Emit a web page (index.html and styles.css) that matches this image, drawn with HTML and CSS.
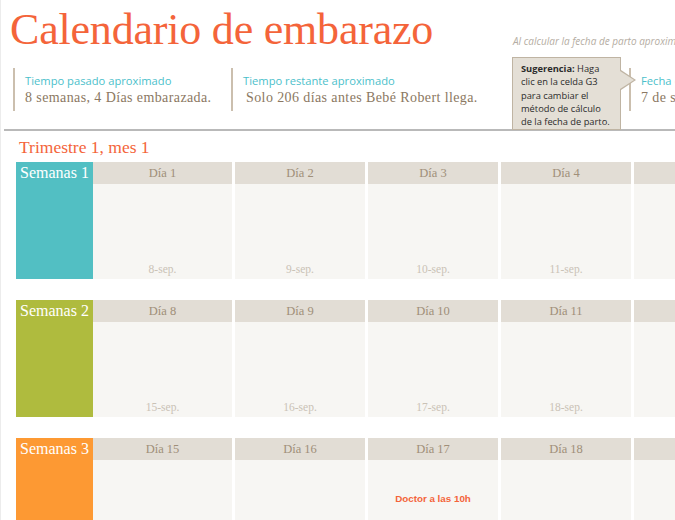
FILE: index.html
```html
<!DOCTYPE html>
<html lang="es">
<head>
    <meta charset="UTF-8">
    <meta name="viewport" content="width=device-width, initial-scale=1.0">
    <title>Calendario de embarazo</title>
    <link rel="stylesheet" href="styles.css">
</head>
<body>
    <div class="page">
        <div class="title-row">
            <h1 class="title">Calendario de embarazo</h1>
            <div class="note">Al calcular la fecha de parto aproximada</div>
        </div>

        <div class="info-row">
            <div class="info first">
                <div class="label">Tiempo pasado aproximado</div>
                <div class="value">8 semanas, 4 Días embarazada.</div>
            </div>
            <div class="info second">
                <div class="label">Tiempo restante aproximado</div>
                <div class="value indent">Solo 206 días antes Bebé Robert llega.</div>
            </div>
            <div class="info">
                <div class="label">Fecha de parto aproximada</div>
                <div class="value">7 de septiembre</div>
            </div>
            <!-- comentario de la celda -->
            <div class="tip"><b>Sugerencia:</b> Haga<br>clic en la celda G3<br>para cambiar el<br>método de cálculo<br>de la fecha de parto.</div>
        </div>

        <div class="rule"></div>

        <h2 class="month">Trimestre 1, mes 1</h2>

        <div class="week">
            <div class="week-label teal">Semanas 1</div>
            <div class="day"><div class="day-head">Día 1</div><div class="day-body"><span class="date">8-sep.</span></div></div>
            <div class="day"><div class="day-head">Día 2</div><div class="day-body"><span class="date">9-sep.</span></div></div>
            <div class="day"><div class="day-head">Día 3</div><div class="day-body"><span class="date">10-sep.</span></div></div>
            <div class="day"><div class="day-head">Día 4</div><div class="day-body"><span class="date">11-sep.</span></div></div>
            <div class="day"><div class="day-head">Día 5</div><div class="day-body"><span class="date">12-sep.</span></div></div>
        </div>

        <div class="week">
            <div class="week-label green">Semanas 2</div>
            <div class="day"><div class="day-head">Día 8</div><div class="day-body"><span class="date">15-sep.</span></div></div>
            <div class="day"><div class="day-head">Día 9</div><div class="day-body"><span class="date">16-sep.</span></div></div>
            <div class="day"><div class="day-head">Día 10</div><div class="day-body"><span class="date">17-sep.</span></div></div>
            <div class="day"><div class="day-head">Día 11</div><div class="day-body"><span class="date">18-sep.</span></div></div>
            <div class="day"><div class="day-head">Día 12</div><div class="day-body"><span class="date">19-sep.</span></div></div>
        </div>

        <div class="week">
            <div class="week-label orange">Semanas 3</div>
            <div class="day"><div class="day-head">Día 15</div><div class="day-body"></div></div>
            <div class="day"><div class="day-head">Día 16</div><div class="day-body"></div></div>
            <div class="day"><div class="day-head">Día 17</div><div class="day-body event"><span class="event-text">Doctor a las 10h</span></div></div>
            <div class="day"><div class="day-head">Día 18</div><div class="day-body"></div></div>
            <div class="day"><div class="day-head">Día 19</div><div class="day-body"></div></div>
        </div>
    </div>
</body>
</html>
```
FILE: styles.css
```css
html, body {
    margin: 0;
    padding: 0;
    overflow: hidden;
    background: #fff;
}
.page {
    position: relative;
    width: 674px;
    height: 520px;
    overflow: hidden;
    border-left: 1px solid #ececec;
    font-family: "Liberation Serif", serif;
}
.title-row {
    display: flex;
}
.title {
    flex: 0 0 512px;
    margin: 0;
    padding: 8px 0 0 9px;
    box-sizing: border-box;
    font-size: 44px;
    font-weight: normal;
    line-height: 44px;
    letter-spacing: -0.2px;
    color: #f4643a;
}
.note {
    align-self: flex-end;
    margin-bottom: 4px;
    white-space: nowrap;
    font-family: "Open Sans", sans-serif;
    font-style: italic;
    font-size: 10px;
    line-height: 14px;
    color: #b5ada3;
}
.info-row {
    position: relative;
    display: flex;
    margin-top: 16px;
    padding-left: 12px;
}
.info {
    flex-shrink: 0;
    height: 43px;
    padding: 5px 0 0 10px;
    box-sizing: border-box;
    border-left: 2px solid #cbbfae;
    white-space: nowrap;
}
.info.first {
    width: 218px;
}
.info.second {
    width: 398px;
}
.label {
    font-family: "Open Sans", sans-serif;
    font-size: 11.2px;
    line-height: 15px;
    color: #4cbfcb;
}
.value {
    font-size: 14px;
    line-height: 20px;
    letter-spacing: 0.4px;
    color: #8b7862;
}
.value.indent {
    padding-left: 3px;
}
.tip {
    position: absolute;
    left: 511px;
    top: -11px;
    width: 109px;
    height: 73px;
    padding: 4px 0 0 8px;
    box-sizing: border-box;
    background: #e4dfd6;
    border: 1px solid #bfb4a3;
    white-space: nowrap;
    font-family: "Open Sans", sans-serif;
    font-size: 9.3px;
    line-height: 13.3px;
    color: #2b2b2b;
}
.tip::before,
.tip::after {
    content: "";
    position: absolute;
    top: 12px;
    border-style: solid;
    border-color: transparent;
}
.tip::before {
    right: -16px;
    border-width: 10px 0 10px 15px;
    border-left-color: #bfb4a3;
}
.tip::after {
    right: -14px;
    top: 13px;
    border-width: 9px 0 9px 14px;
    border-left-color: #e4dfd6;
}
.rule {
    margin: 18px 0 0 3px;
    border-top: 2px solid #b9b9b9;
}
.month {
    margin: 6px 0 5px 18px;
    font-size: 17.5px;
    font-weight: normal;
    line-height: 20px;
    color: #f4643a;
}
.week {
    display: flex;
    margin: 0 0 21px 15px;
}
.week-label {
    flex: 0 0 77px;
    height: 117px;
    padding-left: 4px;
    box-sizing: border-box;
    font-size: 16px;
    line-height: 22px;
    color: #fff;
}
.teal { background: #52bfc3; }
.green { background: #afbb3e; }
.orange { background: #fd9933; }
.day {
    flex: 0 0 130px;
    margin-left: 3px;
}
.week-label + .day {
    flex-basis: 139px;
    margin-left: 0;
}
.day-head {
    height: 22px;
    background: #e2ddd5;
    text-align: center;
    font-size: 12.5px;
    line-height: 22px;
    color: #a08f79;
}
.day-body {
    display: flex;
    flex-direction: column;
    justify-content: flex-end;
    align-items: center;
    height: 95px;
    padding-bottom: 3px;
    box-sizing: border-box;
    background: #f7f6f3;
}
.date {
    font-size: 11.5px;
    line-height: 14px;
    color: #cac2b6;
}
.day-body.event {
    justify-content: flex-start;
    padding-top: 32px;
}
.event-text {
    font-family: "Liberation Sans", sans-serif;
    font-weight: bold;
    font-size: 9.8px;
    line-height: 14px;
    color: #f4643a;
}
```
